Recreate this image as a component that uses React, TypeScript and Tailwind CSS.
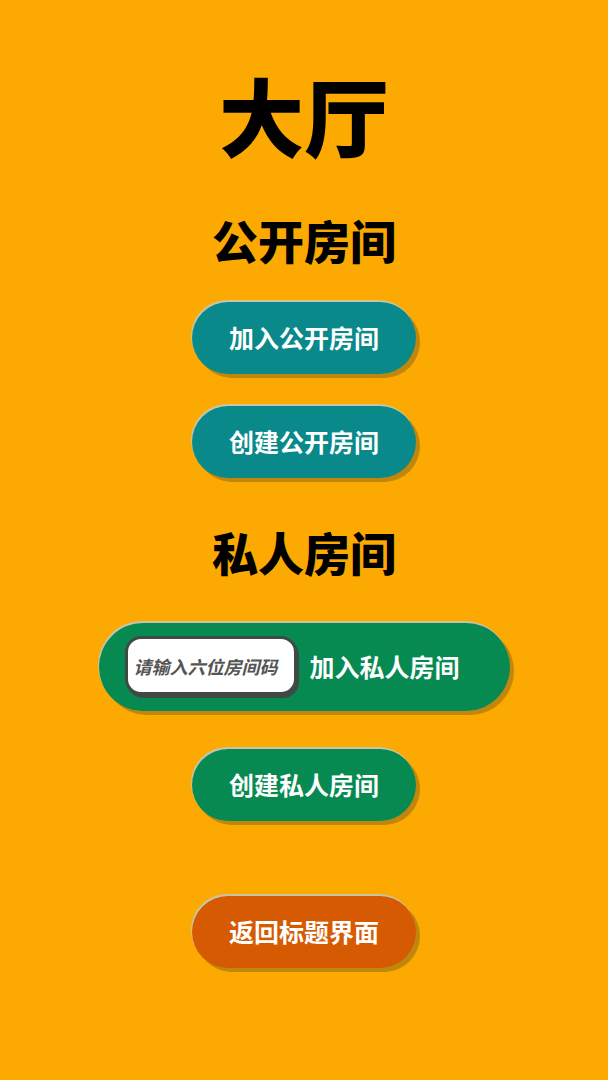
const btn =
  "flex items-center justify-center w-[224px] h-[72px] rounded-full text-white text-[25px] font-bold shadow-[-1px_-2px_0_#c9c4a4,4px_4px_0_#c0870c]";

export default function App() {
  return (
    <div
      className="min-h-screen w-full bg-[#fca901] flex flex-col items-center text-black"
      style={{ fontFamily: '"Noto Sans CJK SC", "Noto Sans", sans-serif' }}
    >
      <h1 className="mt-[71px] text-[85px] leading-none font-black">大厅</h1>

      <h2 className="mt-[60px] text-[46px] leading-none font-black">公开房间</h2>

      <button className={`${btn} mt-[40px] bg-[#0a898b]`}>加入公开房间</button>
      <button className={`${btn} mt-[32px] bg-[#0a898b]`}>创建公开房间</button>

      <h2 className="mt-[50px] text-[46px] leading-none font-black">私人房间</h2>

      <div className="mt-[49px] flex items-center w-[411px] h-[88px] rounded-full bg-[#068a52] pl-[26px] shadow-[-1px_-2px_0_#c9c4a4,4px_4px_0_#c0870c]">
        <input
          placeholder="请输入六位房间码"
          className="w-[172px] h-[59px] -mt-[3px] rounded-[16px] bg-white border-[3px] border-[#3f4a44] shadow-[2px_3px_0_#3f4a44] pl-[6px] pr-0 text-[18px] font-bold italic text-[#555] placeholder:text-[#555] outline-none"
        />
        <span className="ml-[13px] text-white text-[25px] font-bold">加入私人房间</span>
      </div>

      <button className={`${btn} mt-[38px] bg-[#068a52]`}>创建私人房间</button>

      <button className={`${btn} mt-[75px] bg-[#d65a02]`}>返回标题界面</button>
    </div>
  );
}
